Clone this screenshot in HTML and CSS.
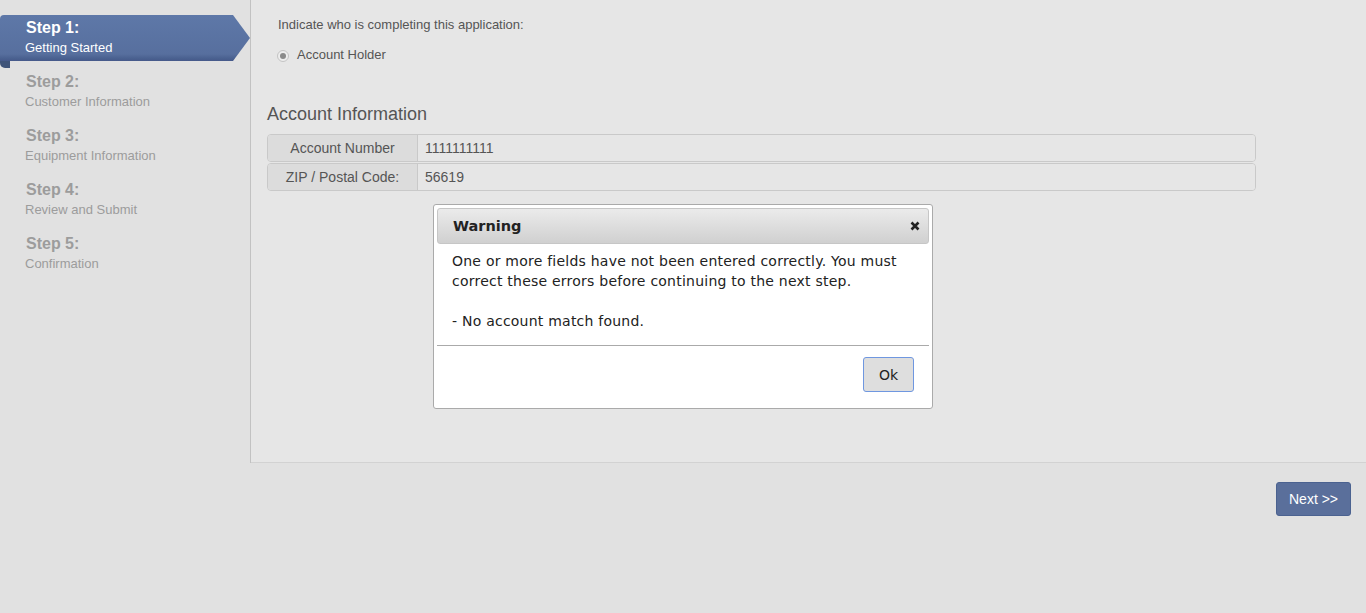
FILE: index.html
```html
<!DOCTYPE html>
<html>
<head>
<meta charset="utf-8">
<link rel="stylesheet" href="styles.css">
</head>
<body>
<div class="layout">
  <aside class="sidebar">
    <div class="step active">
      <div class="step-title">Step 1:</div>
      <div class="step-sub">Getting Started</div>
    </div>
    <div class="step">
      <div class="step-title">Step 2:</div>
      <div class="step-sub">Customer Information</div>
    </div>
    <div class="step">
      <div class="step-title">Step 3:</div>
      <div class="step-sub">Equipment Information</div>
    </div>
    <div class="step">
      <div class="step-title">Step 4:</div>
      <div class="step-sub">Review and Submit</div>
    </div>
    <div class="step">
      <div class="step-title">Step 5:</div>
      <div class="step-sub">Confirmation</div>
    </div>
  </aside>
  <main class="main">
    <div class="question">
      <div class="q-label">Indicate who is completing this application:</div>
      <label class="radio-row"><span class="radio"><span class="radio-dot"></span></span><span>Account Holder</span></label>
    </div>
    <h2 class="section-title">Account Information</h2>
    <div class="fields">
      <div class="field">
        <div class="field-label">Account Number</div>
        <div class="field-value">1111111111</div>
      </div>
      <div class="field">
        <div class="field-label">ZIP / Postal Code:</div>
        <div class="field-value">56619</div>
      </div>
    </div>
  </main>
</div>
<div class="footer">
  <button class="next-btn">Next &gt;&gt;</button>
</div>

<div class="dialog">
  <div class="dialog-titlebar">
    <span class="dialog-title">Warning</span>
    <span class="dialog-close">
      <svg width="10" height="10" viewBox="0 0 10 10"><path d="M1.5 1.5 L8.5 8.5 M8.5 1.5 L1.5 8.5" stroke="#222" stroke-width="2.6" stroke-linecap="butt"/></svg>
    </span>
  </div>
  <div class="dialog-body">
    <p>One or more fields have not been entered correctly. You must correct these errors before continuing to the next step.</p>
    <p>- No account match found.</p>
  </div>
  <div class="dialog-buttons">
    <button class="ok-btn">Ok</button>
  </div>
</div>
</body>
</html>
```

FILE: styles.css
```css
html, body {
  margin: 0;
  padding: 0;
}
body {
  background: #e1e1e1;
  font-family: "Liberation Sans", Arial, sans-serif;
  width: 1366px;
  height: 613px;
  overflow: hidden;
  position: relative;
}
.layout {
  display: flex;
  height: 463px;
}
.sidebar {
  width: 251px;
  flex: none;
  border-right: 1px solid #c2c2c2;
  padding-top: 15px;
  box-sizing: border-box;
  display: flex;
  flex-direction: column;
  gap: 8px;
}
.step {
  height: 46px;
  box-sizing: border-box;
  padding: 3px 0 0 26px;
  color: #9c9c9c;
  position: relative;
}
.step-title {
  font-size: 16px;
  font-weight: bold;
  line-height: 20px;
}
.step-sub {
  font-size: 13px;
  line-height: 20px;
  margin-left: -1px;
}
.step.active {
  color: #fff;
  width: 250px;
  background: linear-gradient(to bottom, #5e78a8 0%, #576f9e 85%, #4a6190 94%, #46598a 100%);
  clip-path: polygon(0 0, 233px 0, 250px 23px, 233px 46px, 0 46px);
  border-top-left-radius: 4px;
}
.sidebar .step.active + .step::before {
  content: "";
  position: absolute;
  left: 0;
  top: -8px;
  width: 10px;
  height: 7px;
  background: #3f5479;
  border-bottom-left-radius: 5px;
}
.main {
  flex: 1;
  background: #e6e6e6;
  border-bottom: 1px solid #d2d2d2;
  box-sizing: border-box;
  padding: 16px 0 0 16px;
  color: #555;
}
.question {
  padding-left: 11px;
  font-size: 13px;
}
.q-label {
  line-height: 18px;
}
.radio-row {
  display: flex;
  align-items: center;
  margin-top: 12px;
  line-height: 18px;
  color: #555;
}
.radio {
  width: 12px;
  height: 12px;
  border-radius: 50%;
  border: 1px solid #c4c4c4;
  background: #ededed;
  box-sizing: border-box;
  display: flex;
  align-items: center;
  justify-content: center;
  margin: 2px 8px 0 -1px;
}
.radio-dot {
  width: 6px;
  height: 6px;
  border-radius: 50%;
  background: #8a8a8a;
}
.section-title {
  margin: 39px 0 0 0;
  font-size: 18px;
  font-weight: normal;
  line-height: 22px;
  color: #555;
}
.fields {
  margin-top: 9px;
  width: 989px;
  display: flex;
  flex-direction: column;
  gap: 1px;
}
.field {
  display: flex;
  height: 28px;
  box-sizing: border-box;
  border: 1px solid #c9c9c9;
  border-radius: 4px;
  overflow: hidden;
  font-size: 14px;
  color: #555;
}
.field-label {
  width: 149px;
  flex: none;
  background: #dcdcdc;
  border-right: 1px solid #c9c9c9;
  text-align: center;
  line-height: 26px;
}
.field-value {
  flex: 1;
  background: #e6e6e6;
  padding-left: 7px;
  line-height: 26px;
}
.footer {
  display: flex;
  justify-content: flex-end;
  padding: 19px 15px 0 0;
}
.next-btn {
  width: 75px;
  height: 34px;
  background: #5a6f9b;
  border: 1px solid #4b6290;
  border-radius: 3px;
  color: #fff;
  font-family: "Liberation Sans", Arial, sans-serif;
  font-size: 14px;
  padding: 0;
}
.dialog {
  position: absolute;
  left: 433px;
  top: 204px;
  width: 500px;
  height: 205px;
  box-sizing: border-box;
  background: #fff;
  border: 1px solid #aaa;
  border-radius: 3px;
  padding: 3px;
  font-family: "DejaVu Sans", Verdana, sans-serif;
  color: #222;
  display: flex;
  flex-direction: column;
}
.dialog-titlebar {
  height: 36px;
  box-sizing: border-box;
  border: 1px solid #c6c6c6;
  border-radius: 3px;
  background: linear-gradient(to bottom, #ebebeb 0%, #d0d0d0 100%);
  display: flex;
  align-items: center;
  justify-content: space-between;
  padding: 0 8px 0 15px;
}
.dialog-title {
  font-weight: bold;
  font-size: 14.5px;
}
.dialog-close {
  display: flex;
  align-items: center;
}
.dialog-body {
  padding: 7px 15px 0 15px;
  font-size: 14px;
  letter-spacing: 0.23px;
  line-height: 20px;
  height: 102px;
  box-sizing: border-box;
  border-bottom: 1px solid #aaa;
}
.dialog-body p {
  margin: 0 0 20px 0;
}
.dialog-buttons {
  display: flex;
  justify-content: flex-end;
  padding: 11px 15px 0 0;
}
.ok-btn {
  width: 51px;
  height: 35px;
  background: #dedede;
  border: 1px solid #6f97e0;
  border-radius: 3px;
  font-family: "DejaVu Sans", Verdana, sans-serif;
  font-size: 14px;
  color: #222;
  padding: 0;
}
```
